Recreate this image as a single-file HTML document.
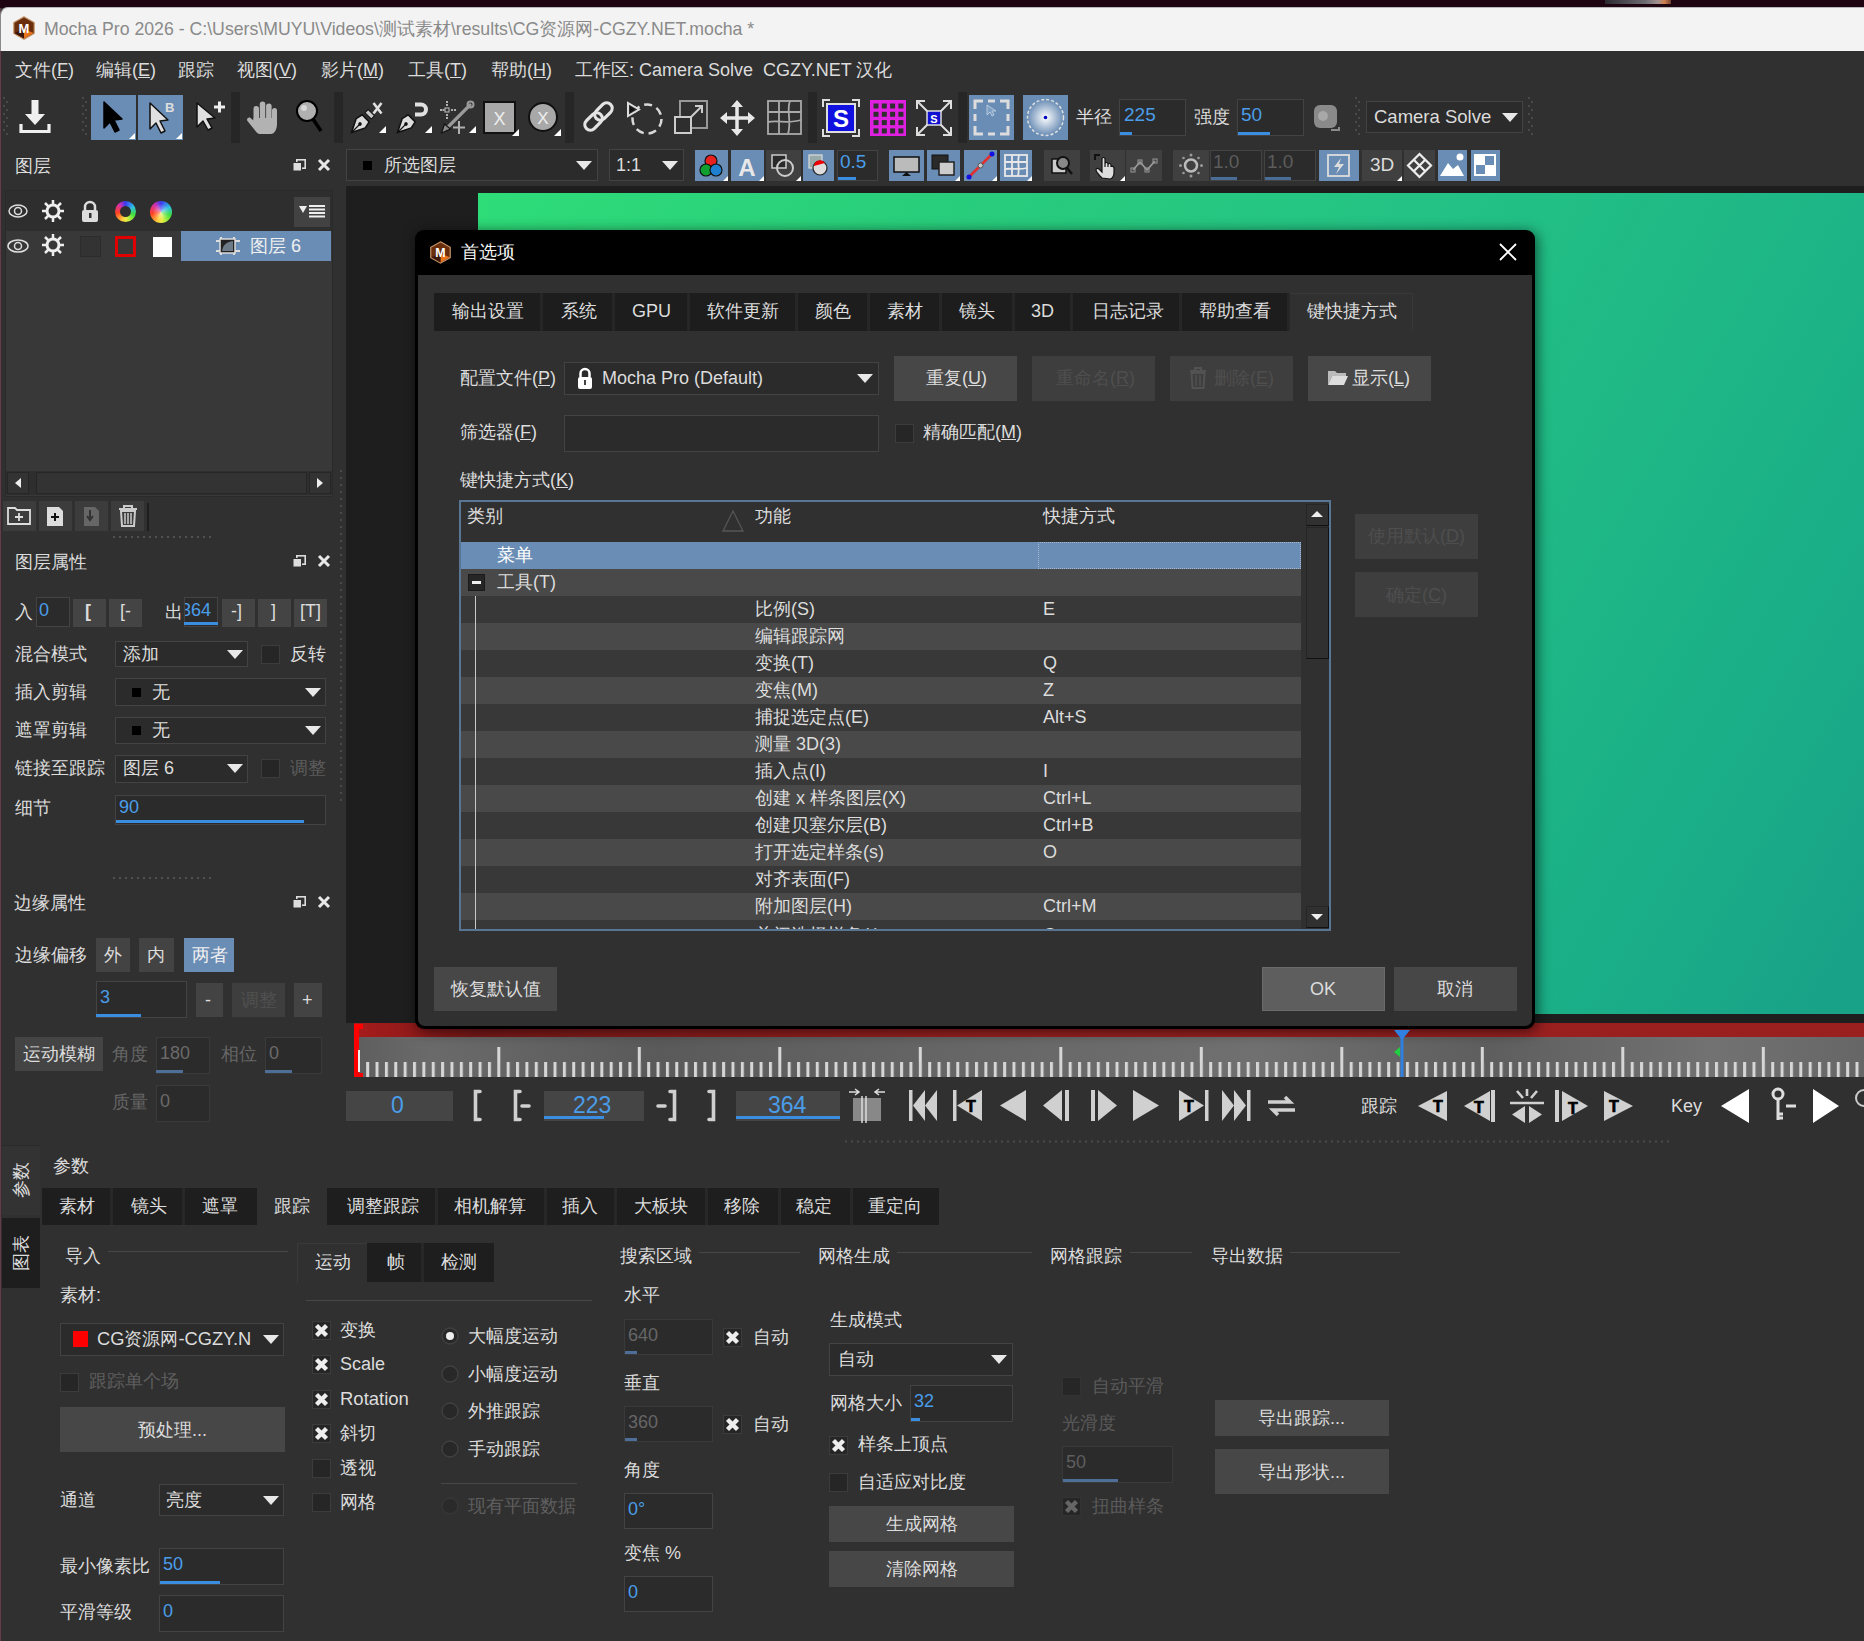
<!DOCTYPE html>
<html><head><meta charset="utf-8">
<style>
*{box-sizing:border-box;margin:0;padding:0}
html,body{width:1864px;height:1641px;overflow:hidden;background:#303030;font-family:"Liberation Sans",sans-serif;color:#dcdcdc;font-size:18px}
.a{position:absolute}
.t{position:absolute;white-space:nowrap;line-height:20px;font-size:18px;color:#dcdcdc}
.g{color:#5c5c5c}
.bl{color:#4a9de8}
.sel{background:#6a8db5}
.btn{position:absolute;background:#474747}
.inp{position:absolute;background:#2b2b2b;border:1px solid #434343}
.bar{position:absolute;height:3px;background:#3b8de0}
.dd{position:absolute;background:#2b2b2b;border:1px solid #434343}
.tri{position:absolute;width:0;height:0;border-left:8px solid transparent;border-right:8px solid transparent;border-top:9px solid #e8e8e8}
.cb{position:absolute;width:19px;height:19px;background:#262626;border:1px solid #3c3c3c}
.sep{position:absolute;background:#262626}
svg{position:absolute;overflow:visible}
</style></head><body>

<!-- desktop strip + title bar -->
<div class="a" style="left:0;top:0;width:1864px;height:8px;background:#1f0512"></div>
<div class="a" style="left:1605px;top:0;width:66px;height:4px;background:linear-gradient(90deg,#2a2a30,#6a6a70 60%,#a09090 80%,#d08050 90%,#704030)"></div>
<div class="a" style="left:0;top:8px;width:1px;height:1633px;background:#5a404c"></div><div class="a" style="left:1px;top:51px;width:1px;height:1590px;background:#3c2a30"></div>
<div class="a" style="left:0;top:7px;width:1864px;height:44px;background:#f3f3f3;border-top-left-radius:8px;border-left:1px solid #8a8a8a;border-top:1px solid #b8b8b8"></div>
<svg style="left:13px;top:16px" width="22" height="24" viewBox="0 0 22 24">
 <polygon points="11,0.8 21.2,6.6 21.2,17.4 11,23.2 0.8,17.4 0.8,6.6" fill="#6a2e0c" stroke="#c89a70" stroke-width="1.2"/>
 <polygon points="11,13 20.6,17.1 11,22.6" fill="#e8741c"/><polygon points="11,13 11,22.6 1.4,17.1" fill="#3c1606"/>
 <text x="11" y="16.5" font-family="Liberation Sans" font-weight="bold" font-size="13" fill="#fff" text-anchor="middle">M</text>
</svg>
<div class="t" style="left:44px;top:19px;color:#8a8a8a;font-size:17.7px">Mocha Pro 2026 - C:\Users\MUYU\Videos\测试素材\results\CG资源网-CGZY.NET.mocha *</div>

<!-- menu bar -->
<div class="a" style="left:2px;top:51px;width:1862px;height:94px;background:#303030"></div>
<div class="t" style="left:15px;top:60px">文件(<u>F</u>)</div>
<div class="t" style="left:96px;top:60px">编辑(<u>E</u>)</div>
<div class="t" style="left:178px;top:60px">跟踪</div>
<div class="t" style="left:237px;top:60px">视图(<u>V</u>)</div>
<div class="t" style="left:321px;top:60px">影片(<u>M</u>)</div>
<div class="t" style="left:408px;top:60px">工具(<u>T</u>)</div>
<div class="t" style="left:491px;top:60px">帮助(<u>H</u>)</div>
<div class="t" style="left:575px;top:60px">工作区: Camera Solve &nbsp;CGZY.NET 汉化</div>

<!-- TOOLBAR1 -->
<svg style="left:3px;top:95px" width="6" height="45"><g fill="#4a4a4a"><rect x="0" y="2" width="2" height="2"/><rect x="3" y="6" width="2" height="2"/><rect x="0" y="10" width="2" height="2"/><rect x="3" y="14" width="2" height="2"/><rect x="0" y="18" width="2" height="2"/><rect x="3" y="22" width="2" height="2"/><rect x="0" y="26" width="2" height="2"/><rect x="3" y="30" width="2" height="2"/><rect x="0" y="34" width="2" height="2"/><rect x="3" y="38" width="2" height="2"/></g></svg>
<svg style="left:19px;top:99px" width="32" height="36" viewBox="0 0 32 36"><path d="M12.5 1h7v14h6.5l-10 11-10-11h6.5z" fill="#f0f0f0"/><path d="M2 25v7.5h28V25" fill="none" stroke="#f0f0f0" stroke-width="3.2"/></svg>
<svg style="left:82px;top:95px" width="6" height="45"><g fill="#4a4a4a"><rect x="0" y="2" width="2" height="2"/><rect x="3" y="6" width="2" height="2"/><rect x="0" y="10" width="2" height="2"/><rect x="3" y="14" width="2" height="2"/><rect x="0" y="18" width="2" height="2"/><rect x="3" y="22" width="2" height="2"/><rect x="0" y="26" width="2" height="2"/><rect x="3" y="30" width="2" height="2"/><rect x="0" y="34" width="2" height="2"/><rect x="3" y="38" width="2" height="2"/></g></svg>
<div class="a sel" style="left:91px;top:95px;width:45px;height:45px"></div>
<svg style="left:91px;top:95px" width="45" height="45"><path d="M13 7l0 26 6-6 5 10 4-2-5-10 8-1z" fill="#000" stroke="#000" stroke-width="1.5" stroke-linejoin="round"/><path d="M44 38v6h-6z" fill="#fff"/></svg>
<div class="a sel" style="left:138px;top:95px;width:45px;height:45px"></div>
<svg style="left:138px;top:95px" width="45" height="45"><path d="M12 8l0 26 6-6 5 10 4-2-5-10 8-1z" fill="#e0e0e0" stroke="#111" stroke-width="1.5" stroke-linejoin="round"/><text x="27" y="17" font-family="Liberation Sans" font-weight="bold" font-size="13" fill="#ddd">B</text><path d="M44 38v6h-6z" fill="#fff"/></svg>
<svg style="left:195px;top:100px" width="30" height="34"><path d="M2 3l0 24 6-6 5 9 4-2-5-9 8-1z" fill="#e0e0e0" stroke="#111" stroke-width="1.5" stroke-linejoin="round"/><path d="M19 7h11M24.5 1.5v11" stroke="#eee" stroke-width="3"/></svg>
<div class="sep" style="left:231px;top:92px;width:9px;height:51px"></div>
<svg style="left:246px;top:100px" width="34" height="36" viewBox="0 0 34 36"><g fill="#b2b2b2"><rect x="7.5" y="6" width="5.5" height="18" rx="2.7"/><rect x="13.8" y="1.5" width="5.5" height="22" rx="2.7"/><rect x="20.1" y="3.5" width="5.5" height="20" rx="2.7"/><rect x="26" y="8" width="5" height="17" rx="2.5"/><path d="M7.5 18h23.5v6c0 6-3 10-6 10h-11c-2 0-3-1-4.5-3l-8-10c-1.5-2 1-4.5 3-3l3 2.5z"/></g></svg>
<svg style="left:295px;top:100px" width="30" height="34"><circle cx="12" cy="11" r="10" fill="#b0b0b0" stroke="#000" stroke-width="2"/><circle cx="9" cy="8" r="3" fill="#d8d8d8"/><path d="M18 19l8 12" stroke="#000" stroke-width="3.5"/></svg>
<div class="sep" style="left:334px;top:92px;width:9px;height:51px"></div>
<svg style="left:350px;top:100px" width="36" height="36"><g transform="translate(10,24) rotate(45)"><path d="M0 12L-6.5 -1L-5 -8H5L6.5 -1Z" fill="#dcdcdc" stroke="#111" stroke-width="1.6"/><path d="M0 12V1" stroke="#111" stroke-width="1.2"/><circle cx="0" cy="0" r="1.8" fill="#111"/><rect x="-4.5" y="-16" width="9" height="4.5" fill="#c8c8c8" stroke="#111" stroke-width="1"/></g><path d="M23.5 3l8 10.5M31.5 3l-8 10.5" stroke="#e0e0e0" stroke-width="2.6"/><path d="M36 26v7h-7z" fill="#fff"/></svg>
<svg style="left:396px;top:100px" width="36" height="36"><g transform="translate(10,24) rotate(45)"><path d="M0 12L-6.5 -1L-5 -8H5L6.5 -1Z" fill="#dcdcdc" stroke="#111" stroke-width="1.6"/><path d="M0 12V1" stroke="#111" stroke-width="1.2"/><circle cx="0" cy="0" r="1.8" fill="#111"/></g><path d="M19 4.5h6a5 5 0 0 1 0 10h-6" fill="none" stroke="#e0e0e0" stroke-width="4"/><path d="M36 26v7h-7z" fill="#fff"/></svg>
<svg style="left:440px;top:100px" width="36" height="36"><path d="M8 27L30 5" stroke="#9a9a9a" stroke-width="3.2" stroke-linecap="round"/><circle cx="30.5" cy="4.5" r="3" fill="none" stroke="#9a9a9a" stroke-width="2"/><path d="M1.5 33l3-9 6 5z" fill="#8a8a8a" stroke="#111" stroke-width="1.2"/><g fill="#b0b0b0"><rect x="5" y="8" width="4" height="4" fill="none" stroke="#b0b0b0" stroke-width="1.2"/><rect x="6" y="1" width="2" height="2"/><rect x="6" y="4" width="2" height="2"/><rect x="6" y="14" width="2" height="2"/><rect x="6" y="17" width="2" height="2"/><rect x="0" y="9" width="2" height="2"/><rect x="2.5" y="9" width="2" height="2"/><rect x="11" y="9" width="2" height="2"/><rect x="14" y="9" width="2" height="2"/><rect x="18" y="21" width="2" height="13"/><rect x="13" y="26.5" width="12" height="2"/></g><path d="M36 26v7h-7z" fill="#fff"/></svg>
<svg style="left:483px;top:101px" width="36" height="35"><rect x="1" y="1" width="31" height="31" fill="#a8a8a8" stroke="#111" stroke-width="2"/><text x="16.5" y="24" font-family="Liberation Sans" font-size="18" fill="#eee" text-anchor="middle">X</text><path d="M36 28v7h-7z" fill="#fff"/></svg>
<svg style="left:528px;top:101px" width="36" height="35"><circle cx="15" cy="16" r="14" fill="#a8a8a8" stroke="#111" stroke-width="2"/><text x="15" y="23" font-family="Liberation Sans" font-size="17" fill="#eee" text-anchor="middle">X</text><path d="M33 28v7h-7z" fill="#fff"/></svg>
<div class="sep" style="left:565px;top:92px;width:9px;height:51px"></div>
<svg style="left:581px;top:100px" width="36" height="34"><g transform="translate(17.5,16.5) rotate(-45)"><rect x="-17" y="-5.5" width="20" height="11" rx="5.5" fill="none" stroke="#e4e4e4" stroke-width="3.2"/><rect x="-3" y="-5.5" width="20" height="11" rx="5.5" fill="none" stroke="#e4e4e4" stroke-width="3.2"/></g></svg>
<svg style="left:626px;top:100px" width="38" height="36"><circle cx="21" cy="19" r="14.5" fill="none" stroke="#d8d8d8" stroke-width="2.5" stroke-dasharray="8 5"/><path d="M2 3l0 13 11-6.5z" fill="#2e2e2e" stroke="#ddd" stroke-width="2"/><path d="M4 6.5l0 6 5-3z" fill="#111"/></svg>
<svg style="left:674px;top:100px" width="36" height="36"><rect x="6" y="1" width="27" height="27" fill="none" stroke="#999" stroke-width="2"/><rect x="1" y="17" width="16" height="16" fill="#2e2e2e" stroke="#ccc" stroke-width="2"/><path d="M17 17l11-11M21 6h7v7" fill="none" stroke="#ccc" stroke-width="2"/></svg>
<svg style="left:720px;top:100px" width="36" height="36"><path d="M17 3v30M2 18h30" stroke="#e8e8e8" stroke-width="3.5"/><path d="M17 0l-6 7h12zM17 36l-6-7h12zM0 18l7-6v12zM35 18l-7-6v12z" fill="#e8e8e8"/></svg>
<svg style="left:767px;top:100px" width="36" height="36"><rect x="1" y="1" width="33" height="33" fill="none" stroke="#aaa" stroke-width="1.8"/><path d="M1 12h33M1 22c10-2 20 2 33-2M12 1v33M23 1c-4 10 2 20-2 33" fill="none" stroke="#aaa" stroke-width="1.8"/></svg>
<div class="sep" style="left:808px;top:92px;width:9px;height:51px"></div>
<svg style="left:822px;top:99px" width="38" height="38"><path d="M1 8V1h7M30 1h7v7M37 30v7h-7M8 37H1v-7" fill="none" stroke="#ddd" stroke-width="2"/><rect x="5" y="5" width="28" height="28" fill="#1010e0" stroke="#ddd" stroke-width="2"/><text x="19" y="28" font-family="Liberation Sans" font-weight="bold" font-size="24" fill="#fff" text-anchor="middle">S</text></svg>
<svg style="left:869px;top:99px" width="38" height="38"><rect x="1" y="1" width="36" height="36" fill="#e020e0"/><g fill="#2e2e2e"><rect x="4.5" y="4.5" width="5" height="5"/><rect x="4.5" y="12.8" width="5" height="5"/><rect x="4.5" y="21.1" width="5" height="5"/><rect x="4.5" y="29.4" width="5" height="5"/><rect x="12.8" y="4.5" width="5" height="5"/><rect x="12.8" y="12.8" width="5" height="5"/><rect x="12.8" y="21.1" width="5" height="5"/><rect x="12.8" y="29.4" width="5" height="5"/><rect x="21.1" y="4.5" width="5" height="5"/><rect x="21.1" y="12.8" width="5" height="5"/><rect x="21.1" y="21.1" width="5" height="5"/><rect x="21.1" y="29.4" width="5" height="5"/><rect x="29.4" y="4.5" width="5" height="5"/><rect x="29.4" y="12.8" width="5" height="5"/><rect x="29.4" y="21.1" width="5" height="5"/><rect x="29.4" y="29.4" width="5" height="5"/></g></svg>
<svg style="left:915px;top:99px" width="38" height="38"><path d="M3 3l11 11M35 3L24 14M3 35l11-11M35 35L24 24" stroke="#ddd" stroke-width="2"/><path d="M2 10V2h8M28 2h8v8M36 28v8h-8M10 36H2v-8" fill="none" stroke="#ddd" stroke-width="2"/><rect x="12" y="12" width="14" height="14" fill="#1010d0" stroke="#ddd" stroke-width="1.5"/><text x="19" y="24" font-family="Liberation Sans" font-weight="bold" font-size="11" fill="#fff" text-anchor="middle">S</text></svg>
<div class="sep" style="left:958px;top:92px;width:9px;height:51px"></div>
<div class="a sel" style="left:969px;top:95px;width:45px;height:45px"></div>
<svg style="left:969px;top:95px" width="45" height="45"><path d="M6 14V6h8M31 6h8v8M39 31v8h-8M14 39H6v-8M6 19v7M39 19v7M19 6h7M19 39h7" fill="none" stroke="#ddd" stroke-width="3"/><path d="M18 10v10l3-3 2 4 2-1-2-4h4z" fill="#7d9fc4" stroke="#c8d6e6" stroke-width="0.8"/></svg>
<div class="a sel" style="left:1023px;top:95px;width:45px;height:45px"></div>
<svg style="left:1023px;top:95px" width="45" height="45"><defs><radialGradient id="rg1"><stop offset="0" stop-color="#fff"/><stop offset="1" stop-color="#6a8db5"/></radialGradient></defs><circle cx="22.5" cy="22.5" r="18" fill="url(#rg1)" stroke="#e0e0e0" stroke-width="1.5" stroke-dasharray="3 2"/><circle cx="22.5" cy="22.5" r="1.8" fill="#0000c0"/></svg>
<div class="t" style="left:1076px;top:107px">半径</div>
<div class="inp" style="left:1119px;top:99px;width:67px;height:37px"></div>
<div class="bar" style="left:1120px;top:132px;width:12px"></div>
<div class="t bl" style="left:1124px;top:105px;font-size:19px">225</div>
<div class="t" style="left:1194px;top:107px">强度</div>
<div class="inp" style="left:1237px;top:99px;width:67px;height:37px"></div>
<div class="bar" style="left:1238px;top:132px;width:32px"></div>
<div class="t bl" style="left:1241px;top:105px;font-size:19px">50</div>
<svg style="left:1313px;top:104px" width="34" height="30"><rect x="1" y="1" width="23" height="23" rx="6" fill="#8a8a8a"/><circle cx="10" cy="12" r="5" fill="#a8a8a8"/><path d="M18 26h8v-3" fill="none" stroke="#8a8a8a" stroke-width="2"/></svg>
<svg style="left:1355px;top:95px" width="6" height="45"><g fill="#4a4a4a"><rect x="0" y="2" width="2" height="2"/><rect x="3" y="6" width="2" height="2"/><rect x="0" y="10" width="2" height="2"/><rect x="3" y="14" width="2" height="2"/><rect x="0" y="18" width="2" height="2"/><rect x="3" y="22" width="2" height="2"/><rect x="0" y="26" width="2" height="2"/><rect x="3" y="30" width="2" height="2"/><rect x="0" y="34" width="2" height="2"/><rect x="3" y="38" width="2" height="2"/></g></svg>
<div class="dd" style="left:1366px;top:101px;width:157px;height:32px"></div>
<div class="t" style="left:1374px;top:107px;font-size:18.5px">Camera Solve</div>
<div class="tri" style="left:1502px;top:113px"></div>
<svg style="left:1528px;top:95px" width="6" height="45"><g fill="#4a4a4a"><rect x="0" y="2" width="2" height="2"/><rect x="3" y="6" width="2" height="2"/><rect x="0" y="10" width="2" height="2"/><rect x="3" y="14" width="2" height="2"/><rect x="0" y="18" width="2" height="2"/><rect x="3" y="22" width="2" height="2"/><rect x="0" y="26" width="2" height="2"/><rect x="3" y="30" width="2" height="2"/><rect x="0" y="34" width="2" height="2"/><rect x="3" y="38" width="2" height="2"/></g></svg>

<!-- ROW2 -->
<div class="dd" style="left:346px;top:149px;width:252px;height:32px"></div>
<div class="a" style="left:363px;top:161px;width:9px;height:9px;background:#000"></div>
<div class="t" style="left:384px;top:155px">所选图层</div>
<div class="tri" style="left:576px;top:161px"></div>
<div class="dd" style="left:609px;top:149px;width:75px;height:32px"></div>
<div class="t" style="left:616px;top:155px">1:1</div>
<div class="tri" style="left:662px;top:161px"></div>
<div class="a sel" style="left:695px;top:150px;width:33px;height:31px"></div>
<svg style="left:695px;top:150px" width="33" height="31"><circle cx="16" cy="11" r="6" fill="#e82020" stroke="#111" stroke-width="1.2"/><circle cx="11" cy="20" r="6" fill="#10a030" stroke="#111" stroke-width="1.2"/><circle cx="21" cy="20" r="6" fill="#2080d0" stroke="#111" stroke-width="1.2"/><path d="M33 26v5h-5z" fill="#fff"/></svg>
<div class="a sel" style="left:731px;top:150px;width:33px;height:31px"></div>
<svg style="left:731px;top:150px" width="33" height="31"><text x="16" y="26" font-family="Liberation Sans" font-weight="bold" font-size="24" fill="#e8e8e8" text-anchor="middle">A</text><path d="M33 26v5h-5z" fill="#fff"/></svg>
<div class="btn" style="left:766px;top:150px;width:35px;height:31px;background:#404040"></div>
<svg style="left:766px;top:150px" width="35" height="31"><rect x="6" y="5" width="14" height="13" fill="#2a2a2a" stroke="#ccc" stroke-width="1.5"/><circle cx="19" cy="18" r="8" fill="none" stroke="#ccc" stroke-width="2"/><path d="M35 26v5h-5z" fill="#fff"/></svg>
<div class="a sel" style="left:803px;top:150px;width:31px;height:31px"></div>
<svg style="left:803px;top:150px" width="31" height="31"><rect x="6" y="5" width="13" height="13" fill="#9aa" stroke="#ddd" stroke-width="1.2"/><circle cx="17" cy="18" r="7" fill="#ddd" stroke="#222" stroke-width="1.2"/><path d="M11 16a6 6 0 0 1 11-3z" fill="#e00"/></svg>
<div class="inp" style="left:837px;top:150px;width:41px;height:31px"></div>
<div class="bar" style="left:838px;top:177px;width:18px"></div>
<div class="t bl" style="left:840px;top:152px;font-size:19px">0.5</div>
<div class="a sel" style="left:889px;top:150px;width:35px;height:31px"></div>
<svg style="left:889px;top:150px" width="35" height="31"><rect x="5" y="7" width="25" height="15" fill="#bbb" stroke="#111" stroke-width="1.5"/><path d="M13 26h9l-4.5-4z" fill="#111"/></svg>
<div class="a sel" style="left:927px;top:150px;width:33px;height:31px"></div>
<svg style="left:927px;top:150px" width="33" height="31"><rect x="5" y="5" width="16" height="14" fill="#2a2a2a" stroke="#111"/><rect x="12" y="12" width="15" height="13" fill="#ccc" stroke="#222" stroke-width="1.5"/><path d="M33 26v5h-5z" fill="#fff"/></svg>
<div class="a sel" style="left:964px;top:150px;width:33px;height:31px"></div>
<svg style="left:964px;top:150px" width="33" height="31"><path d="M5 27L28 4" stroke="#e03030" stroke-width="2.5"/><circle cx="5" cy="27" r="2.5" fill="#1010e0"/><circle cx="28" cy="4" r="2.5" fill="#1010e0"/><circle cx="16.5" cy="15.5" r="2.5" fill="#ccc" stroke="#555"/><path d="M33 26v5h-5z" fill="#fff"/></svg>
<div class="a sel" style="left:1000px;top:150px;width:32px;height:31px"></div>
<svg style="left:1000px;top:150px" width="32" height="31"><rect x="5" y="5" width="22" height="21" fill="none" stroke="#e8e8e8" stroke-width="1.8"/><path d="M5 12h22M5 19c7-1 14 1 22-1M12 5v21M19 5c-2 7 1 14-1 21" fill="none" stroke="#e8e8e8" stroke-width="1.8"/><path d="M32 26v5h-5z" fill="#fff"/></svg>
<div class="btn" style="left:1044px;top:150px;width:36px;height:31px;background:#404040"></div>
<svg style="left:1044px;top:150px" width="36" height="31"><rect x="8" y="9" width="14" height="14" fill="#ccc" stroke="#111" stroke-width="1.5"/><circle cx="19" cy="13" r="6" fill="#888" stroke="#111" stroke-width="2"/><path d="M23 18l5 6" stroke="#111" stroke-width="2.5"/></svg>
<div class="btn" style="left:1090px;top:150px;width:35px;height:31px;background:#404040"></div>
<svg style="left:1090px;top:150px" width="35" height="31"><path d="M5 10V5h5" fill="none" stroke="#111" stroke-width="2"/><path d="M12 28c-2-2-6-6-6-8s2-2 3-1l3 3V9c0-2 3-2 3 0v8-3c0-2 3-2 3 0v3-2c0-2 3-2 3 0v2c0-1 3-1 3 1v5c0 3-2 6-4 6z" fill="#ddd" stroke="#111" stroke-width="1.2"/><path d="M35 26v5h-5z" fill="#fff"/></svg>
<div class="btn" style="left:1126px;top:150px;width:36px;height:31px;background:#404040"></div>
<svg style="left:1126px;top:150px" width="36" height="31"><path d="M7 20l7-8 7 8 8-9" fill="none" stroke="#999" stroke-width="1.8"/><rect x="5" y="18" width="4" height="4" fill="none" stroke="#999"/><rect x="12" y="10" width="4" height="4" fill="none" stroke="#999"/><rect x="19" y="18" width="4" height="4" fill="none" stroke="#999"/><rect x="27" y="9" width="4" height="4" fill="none" stroke="#999"/></svg>
<div class="btn" style="left:1173px;top:150px;width:36px;height:31px;background:#404040"></div>
<svg style="left:1173px;top:150px" width="36" height="31"><circle cx="18" cy="15.5" r="6" fill="none" stroke="#bbb" stroke-width="2.5"/><g fill="#999"><circle cx="18" cy="5" r="1.5"/><circle cx="18" cy="26" r="1.5"/><circle cx="7.5" cy="15.5" r="1.5"/><circle cx="28.5" cy="15.5" r="1.5"/><circle cx="10.5" cy="8" r="1.3"/><circle cx="25.5" cy="8" r="1.3"/><circle cx="10.5" cy="23" r="1.3"/><circle cx="25.5" cy="23" r="1.3"/></g></svg>
<div class="inp" style="left:1210px;top:150px;width:52px;height:31px"></div>
<div class="bar" style="left:1211px;top:177px;width:26px;background:#4a6d96"></div>
<div class="t g" style="left:1213px;top:152px;font-size:19px">1.0</div>
<div class="inp" style="left:1264px;top:150px;width:52px;height:31px"></div>
<div class="bar" style="left:1265px;top:177px;width:26px;background:#4a6d96"></div>
<div class="t g" style="left:1267px;top:152px;font-size:19px">1.0</div>
<div class="a sel" style="left:1319px;top:150px;width:40px;height:31px"></div>
<svg style="left:1319px;top:150px" width="40" height="31"><rect x="9" y="5" width="21" height="21" fill="none" stroke="#ddd" stroke-width="1.8"/><path d="M22 8l-7 9h5l-3 7 8-10h-5z" fill="#ddd"/></svg>
<div class="btn" style="left:1362px;top:150px;width:40px;height:31px;background:#404040"></div>
<div class="t" style="left:1370px;top:155px;font-size:19px">3D</div>
<svg style="left:1362px;top:150px" width="40" height="31"><path d="M40 26v5h-5z" fill="#fff"/></svg>
<div class="btn" style="left:1404px;top:150px;width:31px;height:31px;background:#404040"></div>
<svg style="left:1404px;top:150px" width="31" height="31"><path d="M15.5 4L27 15.5 15.5 27 4 15.5z" fill="none" stroke="#eee" stroke-width="2.2"/><path d="M10 10l11 11M21 10L10 21" stroke="#eee" stroke-width="2.2"/></svg>
<div class="a sel" style="left:1438px;top:150px;width:29px;height:31px"></div>
<svg style="left:1438px;top:150px" width="29" height="31"><path d="M2 26l8-13 5 6 5-4 6 11z" fill="#fff"/><circle cx="22" cy="7" r="3.5" fill="#fff"/></svg>
<div class="a sel" style="left:1471px;top:150px;width:29px;height:31px"></div>
<svg style="left:1471px;top:150px" width="29" height="31"><rect x="3" y="4" width="22" height="22" fill="#fff"/><rect x="14" y="6" width="9" height="9" fill="#6a8db5"/><rect x="5" y="15" width="9" height="9" fill="#6a8db5"/></svg>

<!-- LEFT PANEL -->
<div class="a" style="left:2px;top:145px;width:338px;height:995px;background:#303030"></div>
<div class="t" style="left:15px;top:156px">图层</div>
<svg style="left:292px;top:158px" width="40" height="16"><rect x="4.8" y="1.8" width="8.4" height="8.4" fill="none" stroke="#ddd" stroke-width="1.6"/><rect x="1" y="4.5" width="8.5" height="8.5" fill="#ddd" stroke="#303030" stroke-width="1"/><path d="M27 2l10 10M37 2L27 12" stroke="#e8e8e8" stroke-width="3"/></svg>
<div class="a" style="left:5px;top:190px;width:328px;height:307px;background:#383838;border:1px solid #2a2a2a"></div>
<div class="a" style="left:6px;top:191px;width:326px;height:40px;background:#2e2e2e"></div>
<svg style="left:8px;top:199px" width="24" height="24"><ellipse cx="10" cy="12" rx="9" ry="6" fill="none" stroke="#ddd" stroke-width="1.5"/><circle cx="10" cy="12" r="3.5" fill="none" stroke="#ddd" stroke-width="1.5"/></svg>
<svg style="left:42px;top:200px" width="24" height="24"><circle cx="11" cy="11" r="6" fill="none" stroke="#eee" stroke-width="3"/><path d="M11 0v5M11 17v5M0 11h5M17 11h5M3 3l3.5 3.5M15.5 15.5L19 19M19 3l-3.5 3.5M6.5 15.5L3 19" stroke="#eee" stroke-width="2.5"/></svg>
<svg style="left:81px;top:201px" width="20" height="22"><path d="M4 9V6a5 5 0 0 1 10 0v3" fill="none" stroke="#ddd" stroke-width="2.5"/><rect x="1" y="9" width="16" height="12" rx="2" fill="#ddd"/><rect x="8" y="12" width="2.5" height="5" fill="#333"/></svg>
<div class="a" style="left:115px;top:201px;width:21px;height:21px;border-radius:50%;background:conic-gradient(#3a3af0 0deg,#30c0e0 60deg,#40e040 110deg,#e0f040 170deg,#ffd040 200deg,#ff4020 260deg,#d030b0 320deg,#3a3af0 360deg)"></div><div class="a" style="left:120px;top:206px;width:11px;height:11px;border-radius:50%;background:#2e2e2e"></div>
<div class="a" style="left:150px;top:201px;width:22px;height:22px;border-radius:50%;background:radial-gradient(circle,rgba(255,255,255,.55) 0%,rgba(255,255,255,0) 55%),conic-gradient(#3a3af0 0deg,#30c0e0 60deg,#40e040 110deg,#e0f040 170deg,#ffd040 200deg,#ff4020 260deg,#d030b0 320deg,#3a3af0 360deg)"></div>
<div class="btn" style="left:294px;top:197px;width:36px;height:30px;background:#424242"></div>
<svg style="left:294px;top:197px" width="36" height="30"><path d="M5 9h8l-4 7z" fill="#eee"/><path d="M15 9h16M15 12.5h16M15 16h16M15 19.5h16" stroke="#eee" stroke-width="2"/></svg>
<svg style="left:7px;top:234px" width="24" height="24"><ellipse cx="11" cy="12" rx="10" ry="6" fill="none" stroke="#ddd" stroke-width="1.5"/><circle cx="11" cy="12" r="3.5" fill="none" stroke="#ddd" stroke-width="1.5"/></svg>
<svg style="left:42px;top:234px" width="24" height="24"><circle cx="11" cy="11" r="6" fill="none" stroke="#eee" stroke-width="3"/><path d="M11 0v5M11 17v5M0 11h5M17 11h5M3 3l3.5 3.5M15.5 15.5L19 19M19 3l-3.5 3.5M6.5 15.5L3 19" stroke="#eee" stroke-width="2.5"/></svg>
<div class="a" style="left:80px;top:236px;width:21px;height:21px;background:#333;border:1px solid #2c2c2c"></div>
<div class="a" style="left:115px;top:236px;width:21px;height:21px;border:3px solid #e00000"></div>
<div class="a" style="left:153px;top:237px;width:19px;height:20px;background:#fff"></div>
<div class="a sel" style="left:181px;top:231px;width:150px;height:30px"></div>
<svg style="left:215px;top:234px" width="26" height="24"><path d="M6 3v18M19 3v18M1 7h24M1 17h24" stroke="#ddd" stroke-width="2"/><rect x="5" y="5" width="15" height="14" fill="#222" stroke="#ddd" stroke-width="1.5"/><path d="M7 17c1-6 4-9 11-10v10z" fill="#6d7a88"/></svg>
<div class="t" style="left:250px;top:236px;color:#f0f0f0">图层 6</div>
<!-- hscroll -->
<div class="a" style="left:6px;top:471px;width:326px;height:24px;background:#2e2e2e"></div>
<div class="a" style="left:7px;top:472px;width:22px;height:22px;border:1px solid #262626;background:#333"></div>
<div class="a" style="left:15px;top:478px;width:0;height:0;border-top:5px solid transparent;border-bottom:5px solid transparent;border-right:6px solid #eee"></div>
<div class="a" style="left:36px;top:472px;width:271px;height:22px;border:1px solid #262626;background:#333"></div>
<div class="a" style="left:309px;top:472px;width:22px;height:22px;border:1px solid #262626;background:#333"></div>
<div class="a" style="left:317px;top:478px;width:0;height:0;border-top:5px solid transparent;border-bottom:5px solid transparent;border-left:6px solid #eee"></div>
<!-- layer buttons -->
<div class="btn" style="left:3px;top:501px;width:33px;height:30px;background:#3c3c3c"></div>
<svg style="left:3px;top:501px" width="33" height="30"><path d="M5 7h7l2 2h13v14H5z" fill="none" stroke="#ddd" stroke-width="1.8"/><path d="M16 12v8M12 16h8" stroke="#ddd" stroke-width="1.8"/></svg>
<div class="btn" style="left:39px;top:501px;width:33px;height:30px;background:#3c3c3c"></div>
<svg style="left:39px;top:501px" width="33" height="30"><path d="M8 6h12l4 4v15H8z" fill="#ddd"/><path d="M16 12v8M12 16h8" stroke="#111" stroke-width="2"/></svg>
<div class="btn" style="left:75px;top:501px;width:33px;height:30px;background:#3c3c3c"></div>
<svg style="left:75px;top:501px" width="33" height="30"><path d="M9 6h11l4 4v15H9z" fill="#666"/><path d="M15 9v9M12 15l3 4 3-4" fill="none" stroke="#333" stroke-width="2"/></svg>
<div class="btn" style="left:111px;top:501px;width:33px;height:30px;background:#3c3c3c"></div>
<svg style="left:111px;top:501px" width="33" height="30"><path d="M8 8h18M13 8V5h8v3" fill="none" stroke="#ccc" stroke-width="2"/><path d="M10 10l1 15h12l1-15z" fill="none" stroke="#ccc" stroke-width="2"/><path d="M14 12v11M17 12v11M20 12v11" stroke="#ccc" stroke-width="1.5"/></svg>
<div class="a" style="left:147px;top:503px;width:2px;height:28px;background:#1e1e1e"></div>
<svg style="left:113px;top:536px" width="102" height="4"><path d="M0 1h102" stroke="#505050" stroke-width="2" stroke-dasharray="2 4"/></svg>
<svg style="left:340px;top:470px" width="3" height="335"><path d="M1 0v335" stroke="#4a4a4a" stroke-width="2" stroke-dasharray="2 5"/></svg>

<!-- layer properties -->
<div class="t" style="left:15px;top:552px">图层属性</div>
<svg style="left:292px;top:554px" width="40" height="16"><rect x="4.8" y="1.8" width="8.4" height="8.4" fill="none" stroke="#ddd" stroke-width="1.6"/><rect x="1" y="4.5" width="8.5" height="8.5" fill="#ddd" stroke="#303030" stroke-width="1"/><path d="M27 2l10 10M37 2L27 12" stroke="#e8e8e8" stroke-width="3"/></svg>
<div class="t" style="left:15px;top:602px">入</div>
<div class="inp" style="left:36px;top:597px;width:34px;height:30px"></div>
<div class="t bl" style="left:39px;top:600px">0</div>
<div class="btn" style="left:73px;top:599px;width:33px;height:28px;background:#444"></div><div class="t" style="left:85px;top:601px;font-weight:bold">[</div>
<div class="btn" style="left:109px;top:599px;width:33px;height:28px;background:#444"></div><div class="t" style="left:120px;top:601px">[-</div>
<div class="t" style="left:165px;top:602px">出</div>
<div class="inp" style="left:184px;top:597px;width:34px;height:30px"></div>
<div class="bar" style="left:184px;top:622px;width:34px"></div>
<div class="a" style="left:185px;top:598px;width:32px;height:22px;overflow:hidden"><div class="t bl" style="left:-4px;top:2px">364</div></div>
<div class="btn" style="left:222px;top:599px;width:33px;height:28px;background:#444"></div><div class="t" style="left:231px;top:601px">-]</div>
<div class="btn" style="left:258px;top:599px;width:33px;height:28px;background:#444"></div><div class="t" style="left:271px;top:601px">]</div>
<div class="btn" style="left:294px;top:599px;width:33px;height:28px;background:#444"></div><div class="t" style="left:300px;top:601px">[T]</div>

<div class="t" style="left:15px;top:644px">混合模式</div>
<div class="dd" style="left:115px;top:641px;width:133px;height:26px"></div>
<div class="t" style="left:123px;top:644px">添加</div>
<div class="tri" style="left:227px;top:650px"></div>
<div class="cb" style="left:261px;top:645px"></div>
<div class="t" style="left:290px;top:644px">反转</div>
<div class="t" style="left:15px;top:682px">插入剪辑</div>
<div class="dd" style="left:115px;top:678px;width:211px;height:28px"></div>
<div class="a" style="left:132px;top:688px;width:9px;height:9px;background:#000"></div>
<div class="t" style="left:152px;top:682px">无</div>
<div class="tri" style="left:305px;top:688px"></div>
<div class="t" style="left:15px;top:720px">遮罩剪辑</div>
<div class="dd" style="left:115px;top:717px;width:211px;height:27px"></div>
<div class="a" style="left:132px;top:726px;width:9px;height:9px;background:#000"></div>
<div class="t" style="left:152px;top:720px">无</div>
<div class="tri" style="left:305px;top:726px"></div>
<div class="t" style="left:15px;top:758px">链接至跟踪</div>
<div class="dd" style="left:115px;top:755px;width:133px;height:28px"></div>
<div class="t" style="left:123px;top:758px">图层 6</div>
<div class="tri" style="left:227px;top:764px"></div>
<div class="cb" style="left:261px;top:759px"></div>
<div class="t g" style="left:290px;top:758px">调整</div>
<div class="t" style="left:15px;top:798px">细节</div>
<div class="inp" style="left:115px;top:795px;width:211px;height:30px"></div>
<div class="bar" style="left:116px;top:820px;width:188px"></div>
<div class="t bl" style="left:119px;top:797px">90</div>
<svg style="left:113px;top:877px" width="102" height="4"><path d="M0 1h102" stroke="#505050" stroke-width="2" stroke-dasharray="2 4"/></svg>

<!-- edge properties -->
<div class="t" style="left:14px;top:893px">边缘属性</div>
<svg style="left:292px;top:895px" width="40" height="16"><rect x="4.8" y="1.8" width="8.4" height="8.4" fill="none" stroke="#ddd" stroke-width="1.6"/><rect x="1" y="4.5" width="8.5" height="8.5" fill="#ddd" stroke="#303030" stroke-width="1"/><path d="M27 2l10 10M37 2L27 12" stroke="#e8e8e8" stroke-width="3"/></svg>
<div class="t" style="left:15px;top:945px">边缘偏移</div>
<div class="btn" style="left:96px;top:938px;width:34px;height:34px;background:#434343"></div><div class="t" style="left:104px;top:945px">外</div>
<div class="btn" style="left:139px;top:938px;width:35px;height:34px;background:#434343"></div><div class="t" style="left:147px;top:945px">内</div>
<div class="btn" style="left:184px;top:938px;width:50px;height:34px;background:#6a8db5"></div><div class="t" style="left:192px;top:945px;color:#f0f0f0">两者</div>
<div class="inp" style="left:96px;top:981px;width:91px;height:37px"></div>
<div class="bar" style="left:96px;top:1014px;width:45px"></div>
<div class="t bl" style="left:100px;top:987px">3</div>
<div class="btn" style="left:196px;top:983px;width:27px;height:34px;background:#434343"></div><div class="t" style="left:205px;top:990px">-</div>
<div class="btn" style="left:232px;top:983px;width:53px;height:34px;background:#3e3e3e"></div><div class="t" style="left:241px;top:990px;color:#505050">调整</div>
<div class="btn" style="left:294px;top:983px;width:28px;height:34px;background:#434343"></div><div class="t" style="left:302px;top:990px">+</div>
<div class="btn" style="left:15px;top:1037px;width:88px;height:34px;background:#444"></div><div class="t" style="left:23px;top:1044px">运动模糊</div>
<div class="t g" style="left:112px;top:1044px;color:#666">角度</div>
<div class="inp" style="left:156px;top:1037px;width:54px;height:37px;border-color:#3a3a3a"></div>
<div class="bar" style="left:156px;top:1070px;width:27px;background:#4d6e96"></div>
<div class="t" style="left:160px;top:1043px;color:#6a6a6a">180</div>
<div class="t g" style="left:221px;top:1044px;color:#666">相位</div>
<div class="inp" style="left:265px;top:1037px;width:57px;height:37px;border-color:#3a3a3a"></div>
<div class="bar" style="left:265px;top:1070px;width:27px;background:#4d6e96"></div>
<div class="t" style="left:269px;top:1043px;color:#6a6a6a">0</div>
<div class="t g" style="left:112px;top:1092px;color:#666">质量</div>
<div class="inp" style="left:156px;top:1085px;width:54px;height:37px;border-color:#3a3a3a"></div>
<div class="t" style="left:160px;top:1091px;color:#6a6a6a">0</div>

<!-- VIEWPORT -->
<div class="a" style="left:346px;top:186px;width:1518px;height:837px;background:#1e1e1e"></div>
<div class="a" style="left:478px;top:193px;width:1386px;height:821px;background:linear-gradient(120deg,#2edc78 0%,#28cc7c 28%,#24c385 50%,#1db586 74%,#1aad88 86%,#18a288 98%)"></div>

<!-- TIMELINE -->
<div class="a" style="left:354px;top:1023px;width:1510px;height:14px;background:linear-gradient(90deg,#a81c1c 0%,#7a1818 8%,#8a1c1c 20%,#9a2020 40%,#9a2020 100%)"></div>
<div class="a" style="left:354px;top:1037px;width:1510px;height:40px;background:linear-gradient(90deg,#5e5e5e 0%,#6a6a6a 5%,#5a5a5a 20%,#666 40%,#707070 60%,#5e5e5e 75%,#727272 90%,#666 100%)"></div>
<svg style="left:354px;top:1037px" width="1510" height="40">
 <defs>
  <pattern id="tk" x="2.8" y="0" width="9.367" height="40" patternUnits="userSpaceOnUse"><rect x="0" y="25" width="3" height="15" fill="#d6d6d6"/></pattern>
  <pattern id="tkb" x="2.8" y="0" width="140.5" height="40" patternUnits="userSpaceOnUse"><rect x="0" y="10" width="3" height="15" fill="#d6d6d6"/></pattern>
 </defs>
 <rect x="9" y="0" width="1501" height="40" fill="url(#tk)"/>
 <rect x="9" y="0" width="1501" height="40" fill="url(#tkb)"/>
</svg>
<div class="a" style="left:354px;top:1024px;width:5px;height:53px;background:#f00"></div>
<div class="a" style="left:354px;top:1024px;width:9px;height:5px;background:#f00"></div>
<div class="a" style="left:354px;top:1073px;width:9px;height:4px;background:#f00"></div>
<div class="a" style="left:358px;top:1050px;width:2px;height:22px;background:#eee"></div>
<svg style="left:1393px;top:1028px;z-index:5" width="18" height="50"><path d="M1 2h16l-8 10z" fill="#2f80e0"/><rect x="7.5" y="8" width="3" height="41" fill="#2f80e0"/><path d="M7 19l-6 5 6 5z" fill="#20d040"/></svg>
<!-- transport -->
<div class="a" style="left:346px;top:1091px;width:107px;height:30px;background:#454545"></div>
<div class="t bl" style="left:391px;top:1095px;font-size:23px">0</div>
<svg style="left:470px;top:1088px" width="250" height="36" viewBox="470 1088 250 36"><g fill="none" stroke="#cfcfcf" stroke-width="3.6" stroke-linecap="round"><path d="M480 1091.5h-4.5v28h4.5"/><path d="M520 1091.5h-4.5v28h4.5"/><path d="M522 1106h7"/><path d="M658 1106h7"/><path d="M670 1091.5h4.5v28h-4.5"/><path d="M709 1091.5h4.5v28h-4.5"/></g></svg>

<div class="a" style="left:544px;top:1091px;width:100px;height:30px;background:#454545"></div>
<div class="bar" style="left:544px;top:1116px;width:60px"></div>
<div class="t bl" style="left:573px;top:1095px;font-size:23px">223</div>


<div class="a" style="left:736px;top:1091px;width:104px;height:30px;background:#454545"></div>
<div class="bar" style="left:736px;top:1116px;width:104px"></div>
<div class="t bl" style="left:768px;top:1095px;font-size:23px">364</div>
<svg style="left:848px;top:1088px" width="38" height="35"><rect x="5" y="10" width="28" height="23" fill="#888"/><path d="M14 8v27M18 8v27" stroke="#ddd" stroke-width="1.5"/><path d="M1 4h10M7 1l4 3-4 3M37 4H27M31 1l-4 3 4 3" fill="none" stroke="#ddd" stroke-width="1.5"/></svg>
<svg style="left:905px;top:1089px" width="400" height="34" viewBox="905 1089 400 34">
 <g fill="#d0d0d0">
  <rect x="909" y="1090" width="3.5" height="31"/><path d="M937 1090v31l-12-15.5zM925 1090v31l-12-15.5z"/>
  <rect x="953" y="1090" width="3.5" height="31"/><path d="M982 1090v31l-25-15.5z"/>
  <path d="M1026 1090v31l-26-15.5z"/>
  <path d="M1062 1090v31l-19-15.5z"/><rect x="1065" y="1090" width="4" height="31"/>
  <rect x="1091" y="1090" width="4" height="31"/><path d="M1098 1090v31l19-15.5z"/>
  <path d="M1133 1090v31l26-15.5z"/>
  <path d="M1179 1090v31l25-15.5z"/><rect x="1205" y="1090" width="3.5" height="31"/>
  <path d="M1222 1090v31l12-15.5zM1234 1090v31l12-15.5z"/><rect x="1247" y="1090" width="3.5" height="31"/>
  <path d="M1268 1102h22l-5-5M1295 1110h-22l5 5" fill="none" stroke="#d0d0d0" stroke-width="3.5"/>
 </g>
 <g font-family="Liberation Sans" font-weight="bold" font-size="16" fill="#000" stroke="#000" stroke-width="0.7" text-anchor="middle"><text x="971" y="1112">T</text><text x="1189" y="1112">T</text></g>
</svg>
<div class="t" style="left:1361px;top:1096px;color:#ddd">跟踪</div>
<svg style="left:1410px;top:1086px" width="240" height="40" viewBox="1410 1086 240 40">
 <g fill="#d0d0d0">
  <path d="M1447 1091v30l-29-15z"/>
  <path d="M1490 1091v30l-26-15z"/><rect x="1491" y="1090" width="4" height="32"/>
  <path d="M1517 1091l6 7M1537 1091l-6 7M1527 1089v7M1510 1103h34" stroke="#d0d0d0" stroke-width="2.6" fill="none"/><path d="M1525 1106v17l-13-8.5zM1529 1106v17l13-8.5z"/>
  <rect x="1555" y="1090" width="4" height="32"/><path d="M1562 1091v30l26-15z"/>
  <path d="M1604 1091v30l29-15z"/>
 </g>
 <g font-family="Liberation Sans" font-weight="bold" font-size="16" fill="#000" stroke="#000" stroke-width="0.7" text-anchor="middle"><text x="1438" y="1112">T</text><text x="1479" y="1113">T</text><text x="1573" y="1114">T</text><text x="1614" y="1112">T</text></g>
</svg>
<div class="t" style="left:1671px;top:1096px;color:#ddd">Key</div>
<svg style="left:1720px;top:1086px" width="144" height="40" viewBox="1720 1086 144 40">
 <path d="M1749 1089v34l-28-17z" fill="#fff"/>
 <circle cx="1778" cy="1094" r="5" fill="none" stroke="#ddd" stroke-width="3"/><path d="M1778 1099v21M1778 1114h5M1778 1118h5M1786 1106h10" stroke="#ddd" stroke-width="3" fill="none"/>
 <path d="M1813 1089v34l26-17z" fill="#fff"/>
 <circle cx="1864" cy="1098" r="8" fill="none" stroke="#ccc" stroke-width="2"/>
</svg>
<svg style="left:845px;top:1140px" width="825" height="3"><path d="M0 1.5h825" stroke="#4a4a4a" stroke-width="2" stroke-dasharray="2 4"/></svg>

<!-- DIALOG -->
<div class="a" style="left:415px;top:230px;width:1120px;height:799px;background:#000;border-radius:9px;box-shadow:2px 2px 14px rgba(0,0,0,.6)"></div>
<div class="a" style="left:418px;top:275px;width:1114px;height:751px;background:#303030;border-bottom-left-radius:7px;border-bottom-right-radius:7px"></div>
<svg style="left:430px;top:241px" width="21" height="23" viewBox="0 0 22 24">
 <polygon points="11,0.8 21.2,6.6 21.2,17.4 11,23.2 0.8,17.4 0.8,6.6" fill="#6a2e0c" stroke="#c89a70" stroke-width="1.2"/>
 <polygon points="11,13 20.6,17.1 11,22.6" fill="#e8741c"/><polygon points="11,13 11,22.6 1.4,17.1" fill="#3c1606"/>
 <text x="11" y="16.5" font-family="Liberation Sans" font-weight="bold" font-size="13" fill="#fff" text-anchor="middle">M</text>
</svg>
<div class="t" style="left:461px;top:242px;color:#f4f4f4">首选项</div>
<svg style="left:1499px;top:243px" width="18" height="18"><path d="M1 1l16 16M17 1L1 17" stroke="#fff" stroke-width="1.8"/></svg>
<!-- tabs -->
<div class="a" style="left:434px;top:293px;width:979px;height:38px;background:#1d1d1d"></div>
<div class="a" style="left:1290px;top:293px;width:123px;height:38px;background:#303030;border-top:1px solid #383838;border-right:1px solid #383838"></div>
<div class="a" style="left:540px;top:293px;width:3px;height:38px;background:#262626"></div>
<div class="a" style="left:612px;top:293px;width:3px;height:38px;background:#262626"></div>
<div class="a" style="left:687px;top:293px;width:3px;height:38px;background:#262626"></div>
<div class="a" style="left:795px;top:293px;width:3px;height:38px;background:#262626"></div>
<div class="a" style="left:867px;top:293px;width:3px;height:38px;background:#262626"></div>
<div class="a" style="left:939px;top:293px;width:3px;height:38px;background:#262626"></div>
<div class="a" style="left:1012px;top:293px;width:3px;height:38px;background:#262626"></div>
<div class="a" style="left:1070px;top:293px;width:3px;height:38px;background:#262626"></div>
<div class="a" style="left:1179px;top:293px;width:3px;height:38px;background:#262626"></div>
<div class="a" style="left:1287px;top:293px;width:3px;height:38px;background:#262626"></div>
<div class="t" style="left:452px;top:301px">输出设置</div>
<div class="t" style="left:561px;top:301px">系统</div>
<div class="t" style="left:632px;top:301px">GPU</div>
<div class="t" style="left:707px;top:301px">软件更新</div>
<div class="t" style="left:815px;top:301px">颜色</div>
<div class="t" style="left:887px;top:301px">素材</div>
<div class="t" style="left:959px;top:301px">镜头</div>
<div class="t" style="left:1031px;top:301px">3D</div>
<div class="t" style="left:1092px;top:301px">日志记录</div>
<div class="t" style="left:1199px;top:301px">帮助查看</div>
<div class="t" style="left:1307px;top:301px">键快捷方式</div>
<!-- profile row -->
<div class="t" style="left:460px;top:368px">配置文件(<u>P</u>)</div>
<div class="dd" style="left:564px;top:362px;width:315px;height:33px"></div>
<svg style="left:577px;top:367px" width="16" height="24"><path d="M3.5 10V6.5a4.5 4.5 0 0 1 9 0V10" fill="none" stroke="#fff" stroke-width="2.5"/><rect x="1" y="10" width="14" height="12" rx="2" fill="#fff"/><rect x="7" y="13" width="2" height="5" fill="#444"/></svg>
<div class="t" style="left:602px;top:368px">Mocha Pro (Default)</div>
<div class="tri" style="left:857px;top:374px"></div>
<div class="btn" style="left:894px;top:356px;width:123px;height:45px;background:#474747"></div>
<div class="t" style="left:926px;top:368px">重复(<u>U</u>)</div>
<div class="btn" style="left:1032px;top:356px;width:123px;height:45px;background:#3e3e3e"></div>
<div class="t" style="left:1056px;top:368px;color:#4e4e4e">重命名(<u>R</u>)</div>
<div class="btn" style="left:1170px;top:356px;width:123px;height:45px;background:#3e3e3e"></div>
<svg style="left:1189px;top:367px" width="18" height="22"><path d="M1 4h16M6 4V1h6v3" fill="none" stroke="#525252" stroke-width="2"/><path d="M2.5 6l1 15h11l1-15z" fill="none" stroke="#525252" stroke-width="2"/><path d="M7 8v11M11 8v11" stroke="#525252" stroke-width="1.5"/></svg>
<div class="t" style="left:1214px;top:368px;color:#4e4e4e">删除(<u>E</u>)</div>
<div class="btn" style="left:1308px;top:356px;width:123px;height:45px;background:#474747"></div>
<svg style="left:1327px;top:369px" width="22" height="18"><path d="M1 2h7l2 2h9v3H5L1 16z" fill="#bbb"/><path d="M5 7h16l-4 9H1z" fill="#ddd"/></svg>
<div class="t" style="left:1352px;top:368px">显示(<u>L</u>)</div>
<!-- filter row -->
<div class="t" style="left:460px;top:422px">筛选器(<u>F</u>)</div>
<div class="inp" style="left:564px;top:415px;width:315px;height:37px"></div>
<div class="cb" style="left:895px;top:424px"></div>
<div class="t" style="left:923px;top:422px">精确匹配(<u>M</u>)</div>
<div class="t" style="left:460px;top:470px">键快捷方式(<u>K</u>)</div>
<!-- table -->
<div class="a" style="left:459px;top:500px;width:872px;height:431px;border:2px solid #587594;background:#303030"></div>
<div class="t" style="left:467px;top:506px">类别</div>
<svg style="left:722px;top:509px" width="22" height="24"><path d="M1 22L11 2l10 20z" fill="none" stroke="#555" stroke-width="1.3"/></svg>
<div class="t" style="left:755px;top:506px">功能</div>
<div class="t" style="left:1043px;top:506px">快捷方式</div>
<div class="a" style="left:461px;top:542px;width:840px;height:27px;background:#6a8db5"></div>
<div class="a" style="left:1038px;top:542px;width:263px;height:27px;border:1px dotted #a8b8c8"></div>
<div class="t" style="left:497px;top:545px;color:#fff">菜单</div>
<div class="a" style="left:461px;top:569px;width:840px;height:27px;background:#494949"></div>
<div class="a" style="left:468px;top:574px;width:17px;height:17px;background:#262626;border:1px solid #1a1a1a"></div>
<div class="a" style="left:472px;top:581px;width:9px;height:3px;background:#eee"></div>
<div class="t" style="left:497px;top:572px">工具(T)</div>
<div class="a" style="left:461px;top:596px;width:840px;height:27px;background:#383838"></div>
<div class="a" style="left:461px;top:623px;width:840px;height:27px;background:#494949"></div>
<div class="a" style="left:461px;top:650px;width:840px;height:27px;background:#383838"></div>
<div class="a" style="left:461px;top:677px;width:840px;height:27px;background:#494949"></div>
<div class="a" style="left:461px;top:704px;width:840px;height:27px;background:#383838"></div>
<div class="a" style="left:461px;top:731px;width:840px;height:27px;background:#494949"></div>
<div class="a" style="left:461px;top:758px;width:840px;height:27px;background:#383838"></div>
<div class="a" style="left:461px;top:785px;width:840px;height:27px;background:#494949"></div>
<div class="a" style="left:461px;top:812px;width:840px;height:27px;background:#383838"></div>
<div class="a" style="left:461px;top:839px;width:840px;height:27px;background:#494949"></div>
<div class="a" style="left:461px;top:866px;width:840px;height:27px;background:#383838"></div>
<div class="a" style="left:461px;top:893px;width:840px;height:27px;background:#494949"></div>
<div class="a" style="left:461px;top:920px;width:840px;height:9px;background:#383838;overflow:hidden"><div class="t" style="left:294px;top:5px">关闭选择样条(.)</div><div class="t" style="left:582px;top:5px">O</div></div>
<div class="a" style="left:475px;top:596px;width:1px;height:333px;background:#c8c8c8"></div>
<div class="t" style="left:755px;top:599px">比例(S)</div><div class="t" style="left:1043px;top:599px">E</div>
<div class="t" style="left:755px;top:626px">编辑跟踪网</div>
<div class="t" style="left:755px;top:653px">变换(T)</div><div class="t" style="left:1043px;top:653px">Q</div>
<div class="t" style="left:755px;top:680px">变焦(M)</div><div class="t" style="left:1043px;top:680px">Z</div>
<div class="t" style="left:755px;top:707px">捕捉选定点(E)</div><div class="t" style="left:1043px;top:707px">Alt+S</div>
<div class="t" style="left:755px;top:734px">测量 3D(3)</div>
<div class="t" style="left:755px;top:761px">插入点(I)</div><div class="t" style="left:1043px;top:761px">I</div>
<div class="t" style="left:755px;top:788px">创建 x 样条图层(X)</div><div class="t" style="left:1043px;top:788px">Ctrl+L</div>
<div class="t" style="left:755px;top:815px">创建贝塞尔层(B)</div><div class="t" style="left:1043px;top:815px">Ctrl+B</div>
<div class="t" style="left:755px;top:842px">打开选定样条(s)</div><div class="t" style="left:1043px;top:842px">O</div>
<div class="t" style="left:755px;top:869px">对齐表面(F)</div>
<div class="t" style="left:755px;top:896px">附加图层(H)</div><div class="t" style="left:1043px;top:896px">Ctrl+M</div>
<!-- table scrollbar -->
<div class="a" style="left:1301px;top:502px;width:28px;height:427px;background:#303030"></div>
<div class="a" style="left:1306px;top:504px;width:23px;height:22px;background:#303030;border:1px solid #262626;border-right-color:#111;border-bottom-color:#111"></div>
<div class="a" style="left:1311px;top:511px;width:0;height:0;border-left:6px solid transparent;border-right:6px solid transparent;border-bottom:6px solid #eee"></div>
<div class="a" style="left:1306px;top:527px;width:23px;height:132px;background:#303030;border:1px solid #262626;border-right-color:#111;border-bottom-color:#111"></div>
<div class="a" style="left:1306px;top:906px;width:23px;height:22px;background:#303030;border:1px solid #262626;border-right-color:#111;border-bottom-color:#111"></div>
<div class="a" style="left:1311px;top:914px;width:0;height:0;border-left:6px solid transparent;border-right:6px solid transparent;border-top:6px solid #eee"></div>
<div class="btn" style="left:1355px;top:514px;width:123px;height:45px;background:#3e3e3e"></div>
<div class="t" style="left:1368px;top:526px;color:#4e4e4e">使用默认(<u>D</u>)</div>
<div class="btn" style="left:1355px;top:572px;width:123px;height:45px;background:#3e3e3e"></div>
<div class="t" style="left:1386px;top:585px;color:#4e4e4e">确定(<u>C</u>)</div>
<!-- bottom buttons -->
<div class="btn" style="left:434px;top:967px;width:123px;height:44px;background:#474747"></div>
<div class="t" style="left:451px;top:979px">恢复默认值</div>
<div class="btn" style="left:1262px;top:967px;width:123px;height:44px;background:#5e5e5e;border:1px solid #6a6a6a"></div>
<div class="t" style="left:1310px;top:979px">OK</div>
<div class="btn" style="left:1394px;top:967px;width:123px;height:44px;background:#474747"></div>
<div class="t" style="left:1437px;top:979px">取消</div>

<!-- BOTTOM PANEL -->
<div class="a" style="left:2px;top:1145px;width:38px;height:70px;background:#333;border-top:1px solid #2a2a2a"></div>
<div class="t" style="left:3px;top:1170px;transform:rotate(-90deg);color:#ddd">参数</div>
<div class="a" style="left:2px;top:1218px;width:38px;height:70px;background:#1e1e1e"></div>
<div class="t" style="left:3px;top:1243px;transform:rotate(-90deg);color:#ddd">图表</div>
<div class="t" style="left:53px;top:1156px">参数</div>
<div class="a" style="left:42px;top:1188px;width:897px;height:37px;background:#1e1e1e"></div>
<div class="a" style="left:257px;top:1188px;width:70px;height:37px;background:#303030"></div>
<div class="a" style="left:110px;top:1188px;width:3px;height:37px;background:#282828"></div>
<div class="a" style="left:182px;top:1188px;width:3px;height:37px;background:#282828"></div>
<div class="a" style="left:435px;top:1188px;width:3px;height:37px;background:#282828"></div>
<div class="a" style="left:544px;top:1188px;width:3px;height:37px;background:#282828"></div>
<div class="a" style="left:614px;top:1188px;width:3px;height:37px;background:#282828"></div>
<div class="a" style="left:705px;top:1188px;width:3px;height:37px;background:#282828"></div>
<div class="a" style="left:778px;top:1188px;width:3px;height:37px;background:#282828"></div>
<div class="a" style="left:850px;top:1188px;width:3px;height:37px;background:#282828"></div>
<div class="t" style="left:59px;top:1196px">素材</div>
<div class="t" style="left:131px;top:1196px">镜头</div>
<div class="t" style="left:202px;top:1196px">遮罩</div>
<div class="t" style="left:274px;top:1196px">跟踪</div>
<div class="t" style="left:347px;top:1196px">调整跟踪</div>
<div class="t" style="left:454px;top:1196px">相机解算</div>
<div class="t" style="left:562px;top:1196px">插入</div>
<div class="t" style="left:634px;top:1196px">大板块</div>
<div class="t" style="left:724px;top:1196px">移除</div>
<div class="t" style="left:796px;top:1196px">稳定</div>
<div class="t" style="left:868px;top:1196px">重定向</div>
<!-- import group -->
<div class="t" style="left:65px;top:1246px">导入</div>
<div class="a" style="left:108px;top:1251px;width:180px;height:1px;background:#474747"></div>
<div class="t" style="left:60px;top:1285px">素材:</div>
<div class="dd" style="left:60px;top:1323px;width:224px;height:33px"></div>
<div class="a" style="left:73px;top:1331px;width:15px;height:16px;background:#f00"></div>
<div class="t" style="left:97px;top:1329px;font-size:18.3px">CG资源网-CGZY.N</div>
<div class="tri" style="left:263px;top:1335px"></div>
<div class="cb" style="left:60px;top:1373px"></div>
<div class="t" style="left:89px;top:1371px;color:#5e5e5e">跟踪单个场</div>
<div class="btn" style="left:60px;top:1407px;width:225px;height:45px;background:#474747"></div>
<div class="t" style="left:138px;top:1420px">预处理...</div>
<div class="t" style="left:60px;top:1490px">通道</div>
<div class="dd" style="left:159px;top:1484px;width:125px;height:32px"></div>
<div class="t" style="left:166px;top:1490px">亮度</div>
<div class="tri" style="left:263px;top:1496px"></div>
<div class="t" style="left:60px;top:1556px">最小像素比</div>
<div class="inp" style="left:159px;top:1548px;width:125px;height:37px"></div>
<div class="bar" style="left:160px;top:1581px;width:60px"></div>
<div class="t bl" style="left:163px;top:1554px">50</div>
<div class="t" style="left:60px;top:1602px">平滑等级</div>
<div class="inp" style="left:159px;top:1595px;width:125px;height:37px"></div>
<div class="t bl" style="left:163px;top:1601px">0</div>
<!-- motion subtabs -->
<div class="a" style="left:297px;top:1243px;width:197px;height:39px;background:#1e1e1e"></div>
<div class="a" style="left:297px;top:1243px;width:70px;height:40px;background:#303030;border-left:1px solid #3a3a3a;border-top:1px solid #3a3a3a"></div>
<div class="a" style="left:421px;top:1243px;width:3px;height:39px;background:#282828"></div>
<div class="t" style="left:315px;top:1252px">运动</div>
<div class="t" style="left:387px;top:1252px">帧</div>
<div class="t" style="left:441px;top:1252px">检测</div>
<div class="a" style="left:306px;top:1300px;width:286px;height:1px;background:#474747"></div>
<div class="cb" style="left:312px;top:1321px"></div><svg style="left:312px;top:1321px" width="19" height="19"><path d="M4.5 4.5l10 10M14.5 4.5l-10 10" stroke="#eee" stroke-width="4.3"/></svg>
<div class="t" style="left:340px;top:1320px">变换</div>
<div class="cb" style="left:312px;top:1355px"></div><svg style="left:312px;top:1355px" width="19" height="19"><path d="M4.5 4.5l10 10M14.5 4.5l-10 10" stroke="#eee" stroke-width="4.3"/></svg>
<div class="t" style="left:340px;top:1354px">Scale</div>
<div class="cb" style="left:312px;top:1390px"></div><svg style="left:312px;top:1390px" width="19" height="19"><path d="M4.5 4.5l10 10M14.5 4.5l-10 10" stroke="#eee" stroke-width="4.3"/></svg>
<div class="t" style="left:340px;top:1389px;font-size:18.5px">Rotation</div>
<div class="cb" style="left:312px;top:1424px"></div><svg style="left:312px;top:1424px" width="19" height="19"><path d="M4.5 4.5l10 10M14.5 4.5l-10 10" stroke="#eee" stroke-width="4.3"/></svg>
<div class="t" style="left:340px;top:1423px">斜切</div>
<div class="cb" style="left:312px;top:1459px"></div>
<div class="t" style="left:340px;top:1458px">透视</div>
<div class="cb" style="left:312px;top:1493px"></div>
<div class="t" style="left:340px;top:1492px">网格</div>
<svg style="left:441px;top:1327px" width="18" height="190"><circle cx="9" cy="9" r="8" fill="#282828" stroke="#424242" stroke-width="1.3"/><circle cx="9" cy="9" r="4" fill="#eee"/><circle cx="9" cy="47" r="8" fill="#282828" stroke="#424242" stroke-width="1.3"/><circle cx="9" cy="84" r="8" fill="#282828" stroke="#424242" stroke-width="1.3"/><circle cx="9" cy="122" r="8" fill="#282828" stroke="#424242" stroke-width="1.3"/><circle cx="9" cy="179" r="8" fill="#2a2a2a" stroke="#383838" stroke-width="1.3"/></svg>
<div class="t" style="left:468px;top:1326px">大幅度运动</div>
<div class="t" style="left:468px;top:1364px">小幅度运动</div>
<div class="t" style="left:468px;top:1401px">外推跟踪</div>
<div class="t" style="left:468px;top:1439px">手动跟踪</div>
<div class="a" style="left:441px;top:1483px;width:136px;height:1px;background:#474747"></div>
<div class="t" style="left:468px;top:1496px;color:#5e5e5e">现有平面数据</div>
<!-- search area -->
<div class="t" style="left:620px;top:1246px">搜索区域</div>
<div class="a" style="left:699px;top:1252px;width:101px;height:1px;background:#474747"></div>
<div class="t" style="left:624px;top:1285px">水平</div>
<div class="inp" style="left:624px;top:1319px;width:89px;height:36px;border-color:#3a3a3a"></div>
<div class="bar" style="left:625px;top:1351px;width:12px;background:#4d6e96"></div>
<div class="t" style="left:628px;top:1325px;color:#666">640</div>
<div class="cb" style="left:723px;top:1328px"></div><svg style="left:723px;top:1328px" width="19" height="19"><path d="M4.5 4.5l10 10M14.5 4.5l-10 10" stroke="#eee" stroke-width="4.3"/></svg>
<div class="t" style="left:753px;top:1327px">自动</div>
<div class="t" style="left:624px;top:1373px">垂直</div>
<div class="inp" style="left:624px;top:1406px;width:89px;height:36px;border-color:#3a3a3a"></div>
<div class="bar" style="left:625px;top:1438px;width:12px;background:#4d6e96"></div>
<div class="t" style="left:628px;top:1412px;color:#666">360</div>
<div class="cb" style="left:723px;top:1415px"></div><svg style="left:723px;top:1415px" width="19" height="19"><path d="M4.5 4.5l10 10M14.5 4.5l-10 10" stroke="#eee" stroke-width="4.3"/></svg>
<div class="t" style="left:753px;top:1414px">自动</div>
<div class="t" style="left:624px;top:1460px">角度</div>
<div class="inp" style="left:624px;top:1493px;width:89px;height:36px"></div>
<div class="t bl" style="left:628px;top:1499px">0°</div>
<div class="t" style="left:624px;top:1543px">变焦 %</div>
<div class="inp" style="left:624px;top:1576px;width:89px;height:36px"></div>
<div class="t bl" style="left:628px;top:1582px">0</div>
<!-- mesh gen -->
<div class="t" style="left:818px;top:1246px">网格生成</div>
<div class="a" style="left:897px;top:1252px;width:135px;height:1px;background:#474747"></div>
<div class="t" style="left:830px;top:1310px">生成模式</div>
<div class="dd" style="left:829px;top:1343px;width:184px;height:33px"></div>
<div class="t" style="left:838px;top:1349px">自动</div>
<div class="tri" style="left:991px;top:1355px"></div>
<div class="t" style="left:830px;top:1393px">网格大小</div>
<div class="inp" style="left:910px;top:1385px;width:103px;height:37px"></div>
<div class="bar" style="left:911px;top:1418px;width:9px"></div>
<div class="t bl" style="left:914px;top:1391px">32</div>
<div class="cb" style="left:829px;top:1436px"></div><svg style="left:829px;top:1436px" width="19" height="19"><path d="M4.5 4.5l10 10M14.5 4.5l-10 10" stroke="#eee" stroke-width="4.3"/></svg>
<div class="t" style="left:858px;top:1434px">样条上顶点</div>
<div class="cb" style="left:829px;top:1473px"></div>
<div class="t" style="left:858px;top:1472px">自适应对比度</div>
<div class="btn" style="left:829px;top:1506px;width:185px;height:36px;background:#474747"></div>
<div class="t" style="left:886px;top:1514px">生成网格</div>
<div class="btn" style="left:829px;top:1551px;width:185px;height:36px;background:#474747"></div>
<div class="t" style="left:886px;top:1559px">清除网格</div>
<!-- mesh track -->
<div class="t" style="left:1050px;top:1246px">网格跟踪</div>
<div class="a" style="left:1130px;top:1252px;width:62px;height:1px;background:#474747"></div>
<div class="cb" style="left:1062px;top:1377px;border-color:#333"></div>
<div class="t" style="left:1092px;top:1376px;color:#5a5a5a">自动平滑</div>
<div class="t" style="left:1062px;top:1413px;color:#5a5a5a">光滑度</div>
<div class="inp" style="left:1062px;top:1446px;width:111px;height:37px;border-color:#3a3a3a"></div>
<div class="bar" style="left:1063px;top:1479px;width:55px;background:#4d6e96"></div>
<div class="t" style="left:1066px;top:1452px;color:#5e5e5e">50</div>
<div class="cb" style="left:1062px;top:1497px;border-color:#333"></div><svg style="left:1062px;top:1497px" width="19" height="19"><path d="M4.5 4.5l10 10M14.5 4.5l-10 10" stroke="#666" stroke-width="4.3"/></svg>
<div class="t" style="left:1092px;top:1496px;color:#5a5a5a">扭曲样条</div>
<!-- export -->
<div class="t" style="left:1211px;top:1246px">导出数据</div>
<div class="a" style="left:1290px;top:1252px;width:110px;height:1px;background:#474747"></div>
<div class="btn" style="left:1215px;top:1400px;width:174px;height:36px;background:#474747"></div>
<div class="t" style="left:1258px;top:1408px">导出跟踪...</div>
<div class="btn" style="left:1215px;top:1449px;width:174px;height:45px;background:#474747"></div>
<div class="t" style="left:1258px;top:1462px">导出形状...</div>

</body></html>
